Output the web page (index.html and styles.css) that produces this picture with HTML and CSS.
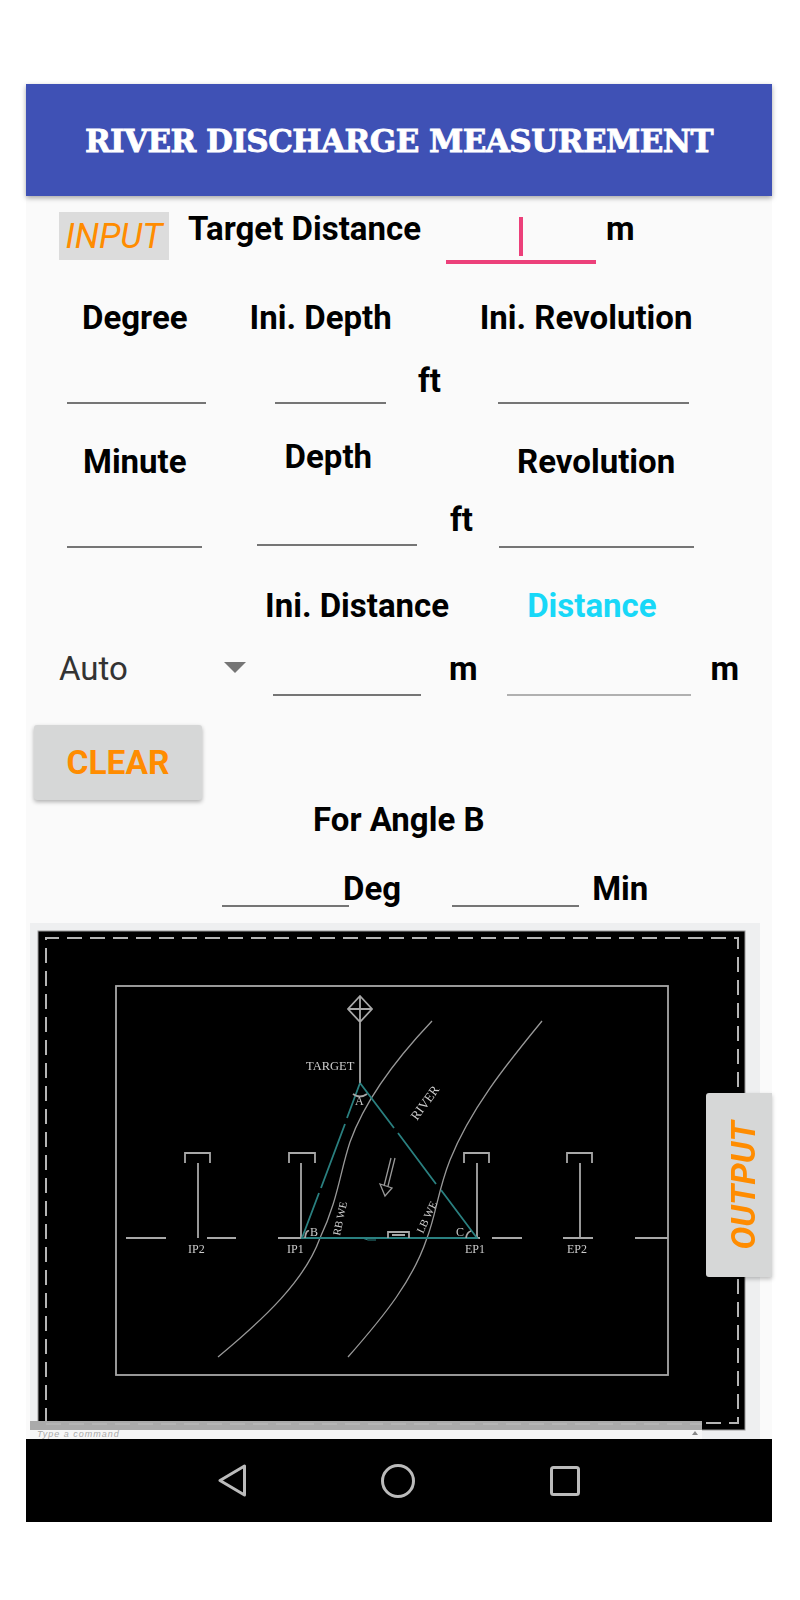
FILE: index.html
```html
<!DOCTYPE html>
<html lang="en">
<head>
<meta charset="UTF-8" />
<meta name="viewport" content="width=device-width, initial-scale=1" />
<title>River Discharge Measurement</title>
<link rel="stylesheet" href="styles.css">
</head>
<body>

<div class="screen">
  <header class="appbar">
    <h1>RIVER DISCHARGE MEASUREMENT</h1>
  </header>

  <div class="row row-target">
    <div class="input-tag">INPUT</div>
    <label class="lbl lbl-target">Target Distance</label>
    <div class="field-target"><span class="caret"></span></div>
    <span class="lbl unit-target">m</span>
  </div>

  <div class="row row-labels-1">
    <label class="lbl lbl-degree">Degree</label>
    <label class="lbl lbl-inidepth">Ini. Depth</label>
    <label class="lbl lbl-inirev">Ini. Revolution</label>
  </div>
  <div class="row row-fields-1">
    <input class="line in-degree" type="text" />
    <input class="line in-inidepth" type="text" />
    <span class="lbl unit-ft1">ft</span>
    <input class="line in-inirev" type="text" />
  </div>

  <div class="row row-labels-2">
    <label class="lbl lbl-minute">Minute</label>
    <label class="lbl lbl-depth">Depth</label>
    <label class="lbl lbl-rev">Revolution</label>
  </div>
  <div class="row row-fields-2">
    <input class="line in-minute" type="text" />
    <input class="line in-depth" type="text" />
    <span class="lbl unit-ft2">ft</span>
    <input class="line in-rev" type="text" />
  </div>

  <div class="row row-labels-3">
    <label class="lbl lbl-inidist">Ini. Distance</label>
    <label class="lbl lbl-dist">Distance</label>
  </div>
  <div class="row row-fields-3">
    <div class="spinner"><span>Auto</span><i class="spinner-arrow"></i></div>
    <input class="line in-inidist" type="text" />
    <span class="lbl unit-m1">m</span>
    <input class="line line-light in-dist" type="text" />
    <span class="lbl unit-m2">m</span>
  </div>

  <button class="btn-clear">CLEAR</button>

  <div class="lbl angle-title">For Angle B</div>
  <div class="row row-angle">
    <input class="line in-deg" type="text" />
    <span class="lbl lbl-deg">Deg</span>
    <input class="line in-min" type="text" />
    <span class="lbl lbl-min">Min</span>
  </div>

  <div class="drawing">
    <svg class="drawing-svg" viewBox="30 923 730 516" width="730" height="516">
      <rect x="30" y="923" width="730" height="516" fill="#eeeff0" />
      <rect x="38" y="931" width="707" height="499" fill="#000" stroke="#999" />
      <g class="soft">
        <path class="dash" d="M46 1423V938H738V1423H46" />
        <rect class="ln" x="116" y="986" width="552" height="389" />

        <!-- target -->
        <path class="ln" d="M360 996L372 1009L360 1022L348 1009ZM348 1009H372M360 996V1083" />
        <text class="cad cad-target" x="306" y="1070">TARGET</text>

        <!-- river banks -->
        <path class="thin" d="M432 1021C395 1060 365 1100 350 1142C340 1172 338 1200 320 1238C305 1280 265 1318 218 1357" />
        <path class="thin" d="M542 1021C505 1066 470 1110 450 1160C438 1190 436 1215 427 1238C413 1280 385 1315 348 1357" />
        <text class="cad-sm" transform="translate(417 1121) rotate(-54)">RIVER</text>
        <text class="cad-xs" transform="translate(340 1236) rotate(-78)">RB WE</text>
        <text class="cad-xs" transform="translate(423 1234) rotate(-65)">LB WE</text>

        <!-- base line and poles -->
        <path class="ln" d="M126 1238H166M207 1238H236M278 1238H345M351 1238H480M492 1238H522M563 1238H593M635 1238H668" />
        <path class="ln" d="M185 1163V1153H210V1163M198 1163V1238M289 1163V1153H315V1163M301 1163V1238" />
        <path class="ln" d="M464 1163V1153H489V1163M477 1163V1238M567 1163V1153H592V1163M580 1163V1238" />
        <text class="cad" x="188" y="1253">IP2</text>
        <text class="cad" x="287" y="1253">IP1</text>
        <text class="cad" x="465" y="1253">EP1</text>
        <text class="cad" x="567" y="1253">EP2</text>

        <!-- triangle -->
        <path class="teal" d="M360 1083L347 1118M345 1124L321 1188M319 1193L302 1238H477L441 1190M436 1184L398 1133M394 1128L360 1083" />
        <path class="ln" d="M353 1094Q360 1099 367 1094M305 1238Q306 1230 309 1231M466 1238Q467 1232 471 1231" />
        <text class="cad" x="355" y="1105">A</text>
        <text class="cad" x="310" y="1236">B</text>
        <text class="cad" x="456" y="1236">C</text>

        <!-- flow arrow and float -->
        <path class="thin" d="M391 1158L384 1186M395 1158L388 1186M380 1184L385 1196L392 1188Z" />
        <path class="ln" d="M388 1238V1232H409V1238M392 1235H405" />
        <path class="teal-thin" d="M362 1238L368 1240H376" />
      </g>
      <rect x="30" y="1421" width="672" height="9" fill="#aaa" />
      <path class="dash" d="M46 1424H702" />
      <rect x="30" y="1430" width="672" height="9" fill="#f6f6f6" />
      <text class="cmd" x="37" y="1437">Type a command</text>
      <path d="M692 1435L695 1431L698 1435Z" fill="#888" />
    </svg>
  </div>

  <nav class="navbar">
    <svg width="28" height="33" viewBox="0 0 28 33"><path class="nav-ico" d="M26.500 2V31L2 16.500Z" /></svg>
    <svg width="34" height="34" viewBox="0 0 34 34"><circle class="nav-ico" cx="17" cy="17" r="15.500" /></svg>
    <svg width="30" height="30" viewBox="0 0 30 30"><rect class="nav-ico" x="1.500" y="1.500" width="27" height="27" rx="2" /></svg>
  </nav>

  <div class="output-tab"><span>OUTPUT</span></div>
</div>

</body>
</html>
```
FILE: styles.css
```css
body {
  margin: 0;
  background: #fff;
  font-family: Roboto, "Liberation Sans", sans-serif;
}
.screen {
  position: relative;
  width: 746px;
  margin: 84px 0 78px 26px;
  background: #fafafa;
}
.appbar {
  box-sizing: border-box;
  height: 112px;
  padding-top: 2px;
  background: #3f51b5;
  box-shadow: 0 2px 5px rgba(0, 0, 0, 0.35);
  display: flex;
  align-items: center;
  justify-content: center;
}
.appbar h1 {
  margin: 0;
  color: #fff;
  font-family: "DejaVu Serif", serif;
  font-weight: bold;
  font-size: 31px;
  letter-spacing: -0.55px;
  -webkit-text-stroke: 0.8px #fff;
  white-space: nowrap;
}
.row {
  display: flex;
  align-items: flex-end;
}
.lbl {
  padding-top: 2px;
  font-size: 33px;
  font-weight: bold;
  line-height: 34px;
  color: #000;
  white-space: nowrap;
}
.line {
  display: block;
  box-sizing: border-box;
  padding: 0;
  height: 40px;
  background: transparent;
  border: none;
  border-bottom: 2px solid #757575;
  outline: none;
}
.line-light {
  border-bottom-color: #b0b0b0;
}

/* target row */
.row-target {
  height: 74px;
  align-items: flex-start;
}
.input-tag {
  width: 110px;
  height: 48px;
  margin: 16px 0 0 33px;
  background: #dcdcdc;
  color: #ff8c00;
  font-size: 35px;
  font-style: italic;
  line-height: 50px;
  text-align: center;
}
.lbl-target {
  margin: 14px 0 0 19px;
}
.field-target {
  box-sizing: border-box;
  width: 150px;
  height: 47px;
  margin: 21px 0 0 25px;
  border-bottom: 4px solid #ec407a;
  display: flex;
  justify-content: center;
}
.caret {
  width: 4px;
  height: 39px;
  background: #ec407a;
}
.unit-target {
  margin: 14px 0 0 10px;
}

/* degree / depth / revolution */
.row-labels-1 {
  padding-top: 29px;
}
.lbl-degree { margin-left: 56px; }
.lbl-inidepth { margin-left: 62px; }
.lbl-inirev { margin-left: 88px; }

.row-fields-1 {
  height: 69px;
}
.in-degree { width: 139px; margin-left: 41px; }
.in-inidepth { width: 111px; margin-left: 69px; }
.unit-ft1 { margin: 0 0 6px 32px; }
.in-inirev { width: 191px; margin-left: 57px; }

.row-labels-2 {
  height: 75px;
}
.lbl-minute { margin-left: 57px; }
.lbl-depth { margin: 0 0 5px 98px; }
.lbl-rev { margin-left: 145px; }

.row-fields-2 {
  height: 69px;
}
.in-minute { width: 135px; margin-left: 41px; }
.in-depth { width: 160px; margin: 0 0 2px 55px; }
.unit-ft2 { margin: 0 0 11px 33px; }
.in-rev { width: 195px; margin-left: 26px; }

.row-labels-3 {
  padding-top: 39px;
}
.lbl-inidist { margin-left: 239px; }
.lbl-dist { margin-left: 78px; color: #18d8f8; }

.row-fields-3 {
  height: 73px;
}
.spinner {
  box-sizing: border-box;
  width: 187px;
  height: 36px;
  margin: 0 0 10px 33px;
  display: flex;
  justify-content: space-between;
  align-items: center;
  font-size: 33px;
  color: #333;
}
.spinner-arrow {
  width: 0;
  height: 0;
  margin-top: -2px;
  border-left: 11px solid transparent;
  border-right: 11px solid transparent;
  border-top: 11px solid #757575;
}
.in-inidist { width: 148px; margin-left: 27px; }
.unit-m1 { margin: 0 0 10px 28px; }
.in-dist { width: 184px; margin-left: 29px; }
.unit-m2 { margin: 0 0 10px 20px; }

/* clear */
.btn-clear {
  display: block;
  width: 168px;
  height: 75px;
  margin: 29px 0 0 8px;
  padding: 0;
  border: none;
  border-radius: 3px;
  background: #d6d7d7;
  box-shadow: 0 2px 4px rgba(0, 0, 0, 0.3);
  color: #ff8c00;
  font-family: Roboto, sans-serif;
  font-size: 33.500px;
  font-weight: bold;
}

/* angle b */
.angle-title {
  margin: 1px 0 0 287px;
}
.row-angle {
  height: 70px;
}
.in-deg { width: 127px; margin-left: 196px; }
.lbl-deg { margin: 0 0 1px -6px; }
.in-min { width: 127px; margin-left: 51px; }
.lbl-min { margin: 0 0 1px 13px; }

/* cad drawing */
.drawing {
  margin: 16px 0 0 4px;
  height: 516px;
}
.drawing-svg {
  display: block;
}
.soft {
  filter: blur(0.4px);
}
.dash {
  fill: none;
  stroke: #b5b5b5;
  stroke-width: 2;
  stroke-dasharray: 15 8;
}
.ln {
  fill: none;
  stroke: #a8a8a8;
  stroke-width: 1.800;
}
.thin {
  fill: none;
  stroke: #999;
  stroke-width: 1.300;
}
.teal {
  fill: none;
  stroke: #2a8080;
  stroke-width: 1.800;
}
.teal-thin {
  fill: none;
  stroke: #2a8080;
  stroke-width: 1;
}
.cad, .cad-sm, .cad-xs {
  fill: #ccc;
  font-family: "Liberation Serif", serif;
}
.cad { font-size: 12px; }
.cad-target { font-size: 12.500px; }
.cad-sm { font-size: 13px; }
.cad-xs { font-size: 11px; }
.cmd {
  fill: #aaa;
  font-family: "Liberation Sans", sans-serif;
  font-size: 9px;
  font-style: italic;
  letter-spacing: 1px;
}

/* nav */
.navbar {
  height: 83px;
  background: #000;
  display: flex;
  align-items: center;
  justify-content: center;
  gap: 135px;
}
.nav-ico {
  fill: none;
  stroke: #bbb;
  stroke-width: 3;
  stroke-linejoin: round;
}

/* output tab sits over the drawing */
.output-tab {
  position: absolute;
  left: 680px;
  top: 1009px;
  box-sizing: border-box;
  width: 66px;
  height: 184px;
  padding-left: 8px;
  border-radius: 3px 0 0 3px;
  background: #d6d7d7;
  box-shadow: 0 2px 4px rgba(0, 0, 0, 0.25);
  display: flex;
  align-items: center;
  justify-content: center;
}
.output-tab span {
  writing-mode: vertical-rl;
  transform: rotate(180deg);
  color: #ff8c00;
  font-size: 34px;
  font-style: italic;
  font-weight: bold;
}
```
